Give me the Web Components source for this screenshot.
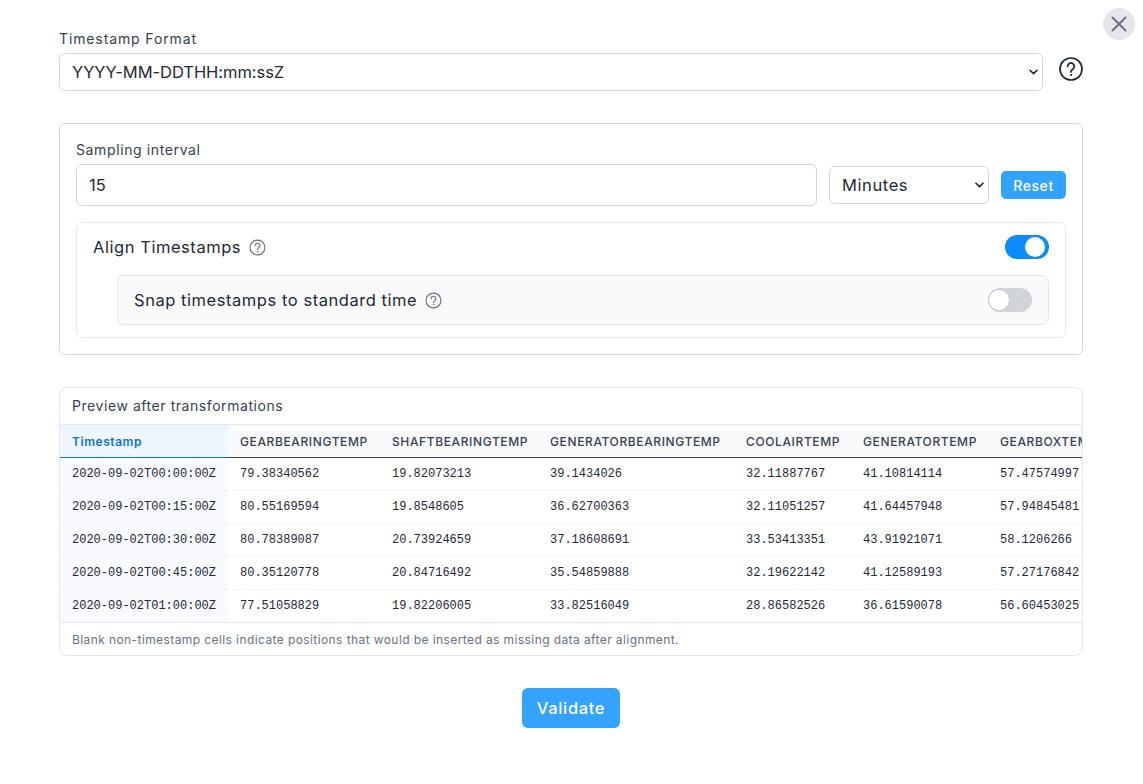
<!DOCTYPE html>
<html><head><meta charset="utf-8"><title>Timestamp</title>
<style>
html,body{margin:0;padding:0;background:#fff}
body{font-family:Inter,"Noto Sans",sans-serif;color:#1f2937}
</style></head><body>
<ts-dialog>
  <ts-field label="Timestamp Format">
    <div style="display:flex;align-items:center;gap:16px">
      <ts-select style="flex:1" h="38" fs="16.5" ls="-.05" options="YYYY-MM-DDTHH:mm:ssZ"></ts-select>
      <ts-help size="24" big style="margin-bottom:6px"></ts-help>
    </div>
  </ts-field>
  <ts-sampling></ts-sampling>
  <ts-preview></ts-preview>
  <ts-validate>Validate</ts-validate>
</ts-dialog>
<script>
function def(name, html, init){
  customElements.define(name, class extends HTMLElement{
    connectedCallback(){
      if(this.shadowRoot) return;
      const r=this.attachShadow({mode:'open'});
      r.innerHTML=typeof html==='function'?html(this):html;
      if(init) init(this,r);
    }
  });
}
def('ts-dialog',`<style>
:host{display:block;box-sizing:border-box;width:1143px;height:784px;padding:29px 60px 0 59px;position:relative;overflow:hidden}
.close{position:absolute;right:8px;top:8px;width:32px;height:32px;border-radius:50%;background:#e5e7eb;display:flex;align-items:center;justify-content:center}
</style><div class="close"><svg width="18" height="18" viewBox="0 0 18 18" fill="none" stroke="#6b7280" stroke-width="2" stroke-linecap="round"><path d="M2.5 2.5 15.5 15.5M15.5 2.5 2.5 15.5"/></svg></div><slot></slot>`);
def('ts-field',e=>`<style>
:host{display:block}
.l{font-size:14px;letter-spacing:.88px;line-height:17px;color:#374151;margin-bottom:6px;padding-top:1px}
</style><div class="l">${e.getAttribute('label')}</div><slot></slot>`);
def('ts-select',e=>{
  const h=e.getAttribute('h'),fs=e.getAttribute('fs'),ls=e.getAttribute('ls')||'.3';
  return `<style>
:host{display:block;position:relative}
select{display:block;width:100%;box-sizing:border-box;height:${h}px;border:1px solid #d1d5db;border-radius:6px;background:#fff;font:400 ${fs}px Inter,sans-serif;letter-spacing:${ls}px;color:#1f2937;padding:0 12px;appearance:none;-webkit-appearance:none}
svg{position:absolute;right:5px;top:50%;margin-top:-3px;pointer-events:none}
</style><select><option>${e.getAttribute('options')}</option></select><svg width="9" height="6" viewBox="0 0 9 6" fill="none" stroke="#1f2937" stroke-width="1.6" stroke-linecap="round" stroke-linejoin="round"><path d="M1 1.2 4.5 4.6 8 1.2"/></svg>`});
def('ts-help',e=>{
  const s=e.getAttribute('size')||16, big=e.hasAttribute('big');
  const c=big?'#1f2937':'#6b7280';
  return `<style>:host{display:inline-flex;flex:none}svg{display:block}</style>
<svg width="${s}" height="${s}" viewBox="0 0 24 24" fill="none" stroke="${c}" stroke-width="${big?1.7:1.6}" stroke-linecap="round"><circle cx="12" cy="12" r="${big?11:10.5}"/><path d="M8.6 9.4a3.4 3.4 0 1 1 5.2 2.9c-1.2.8-1.8 1.4-1.8 2.6"/><circle cx="12" cy="18" r=".6" fill="${c}" stroke-width="1"/></svg>`});
def('ts-toggle',e=>{
  const on=e.hasAttribute('on');
  return `<style>
:host{display:block;flex:none;width:44px;height:24px}
.t{box-sizing:border-box;width:44px;height:24px;border-radius:12px;background:${on?'#0a8cff':'#d1d5db'};padding:${on?'2px 4px':'1px 0'};display:flex;justify-content:${on?'flex-end':'flex-start'}}
.k{width:${on?20:22}px;height:${on?20:22}px;border-radius:50%;background:#fff;${on?'':'box-sizing:border-box;border:1px solid #c5c8ce'}}
</style><div class="t"><div class="k"></div></div>`});
def('ts-button',e=>`<style>
:host{display:block;flex:none}
.b{display:flex;align-items:center;justify-content:center;width:65px;height:28px;background:#33a3ff;color:#fff;border-radius:5px;font-size:14px;font-weight:500;letter-spacing:.6px}
</style><div class="b"><slot></slot></div>`);
def('ts-sampling',`<style>
:host{display:block;box-sizing:border-box;height:232px;margin-top:32px;border:1px solid #d1d5db;border-radius:6px;padding:17px 16px 16px}
.l{font-size:14px;letter-spacing:.62px;line-height:17px;color:#374151;margin-bottom:6px;height:17px}
.row{display:flex;align-items:center;height:42px}
.in{flex:1;box-sizing:border-box;height:42px;border:1px solid #d1d5db;border-radius:6px;display:flex;align-items:center;padding:0 12px;font-size:16.5px;color:#1f2937}
ts-select{width:160px;margin:0 12px}
.align{margin-top:16px;box-sizing:border-box;height:116px;border:1px solid #e5e7eb;border-radius:6px;padding:12px 16px}
.a{display:flex;align-items:center;height:24px;font-size:16.5px;font-weight:400;letter-spacing:.55px;color:#1f2937}
.a span{margin-right:8px}
.a ts-toggle{margin-left:auto}
.snap{margin:16px 0 0 24px;box-sizing:border-box;height:50px;border:1px solid #e5e7eb;border-radius:6px;background:#f9fafb;padding:0 16px;display:flex;align-items:center;font-size:16.5px;letter-spacing:.55px;color:#1f2937}
.snap span{margin-right:8px}
.snap ts-toggle{margin-left:auto}
</style>
<div class="l">Sampling interval</div>
<div class="row"><div class="in">15</div><ts-select h="38" fs="16.5" ls=".6" options="Minutes"></ts-select><ts-button>Reset</ts-button></div>
<div class="align">
  <div class="a"><span>Align Timestamps</span><ts-help size="17"></ts-help><ts-toggle on></ts-toggle></div>
  <div class="snap"><span>Snap timestamps to standard time</span><ts-help size="17"></ts-help><ts-toggle></ts-toggle></div>
</div>`);
const cols=[168,152,158,196,117,137,200];
const heads=['Timestamp','GEARBEARINGTEMP','SHAFTBEARINGTEMP','GENERATORBEARINGTEMP','COOLAIRTEMP','GENERATORTEMP','GEARBOXTEMP'];
const rows=[
['2020-09-02T00:00:00Z','79.38340562','19.82073213','39.1434026','32.11887767','41.10814114','57.47574997'],
['2020-09-02T00:15:00Z','80.55169594','19.8548605','36.62700363','32.11051257','41.64457948','57.94845481'],
['2020-09-02T00:30:00Z','80.78389087','20.73924659','37.18608691','33.53413351','43.91921071','58.1206266'],
['2020-09-02T00:45:00Z','80.35120778','20.84716492','35.54859888','32.19622142','41.12589193','57.27176842'],
['2020-09-02T01:00:00Z','77.51058829','19.82206005','33.82516049','28.86582526','36.61590078','56.60453025']];
def('ts-preview',`<style>
:host{display:block;box-sizing:border-box;height:269px;margin-top:32px;border:1px solid #e5e7eb;border-radius:8px;overflow:hidden}
.h{height:37px;box-sizing:border-box;padding:0 12px 2px;display:flex;align-items:center;font-size:14px;letter-spacing:.56px;color:#374151;border-bottom:1px solid #e5e7eb}
.w{overflow:hidden}
table{border-collapse:separate;border-spacing:0;table-layout:fixed;width:${cols.reduce((a,b)=>a+b)}px}
th{height:33px;box-sizing:border-box;padding:0 12px;text-align:left;background:#f9fafb;border-bottom:1px solid #374151;font-size:12px;font-weight:500;letter-spacing:.62px;color:#374151;white-space:nowrap;overflow:hidden}
th:first-child{background:#eff6ff;color:#0a74da;border-bottom-color:#0a74da;font-weight:600;letter-spacing:.55px}
td{height:33px;box-sizing:border-box;padding:0 12px;font:12px "Liberation Mono",monospace;color:#1f2937;border-bottom:1px solid #f3f4f6;white-space:nowrap}
td:first-child{background:#f8fafe}
tr:last-child td{border-bottom-color:#e5e7eb}
.f{box-sizing:border-box;height:32px;padding:1px 12px 0;display:flex;align-items:center;font-size:12px;letter-spacing:.41px;color:#6b7280}
</style>
<div class="h">Preview after transformations</div>
<div class="w"><table><colgroup>${cols.map(c=>`<col style="width:${c}px">`).join('')}</colgroup>
<thead><tr>${heads.map(h=>`<th>${h}</th>`).join('')}</tr></thead>
<tbody>${rows.map(r=>`<tr>${r.map(c=>`<td>${c}</td>`).join('')}</tr>`).join('')}</tbody></table></div>
<div class="f">Blank non-timestamp cells indicate positions that would be inserted as missing data after alignment.</div>`);
def('ts-validate',`<style>
:host{display:flex;justify-content:center;margin-top:32px}
.b{display:flex;align-items:center;justify-content:center;width:98px;height:40px;background:#33a3ff;color:#fff;border-radius:6px;font-size:16.5px;font-weight:500;letter-spacing:.65px}
</style><div class="b"><slot></slot></div>`);
</script>
</body></html>
